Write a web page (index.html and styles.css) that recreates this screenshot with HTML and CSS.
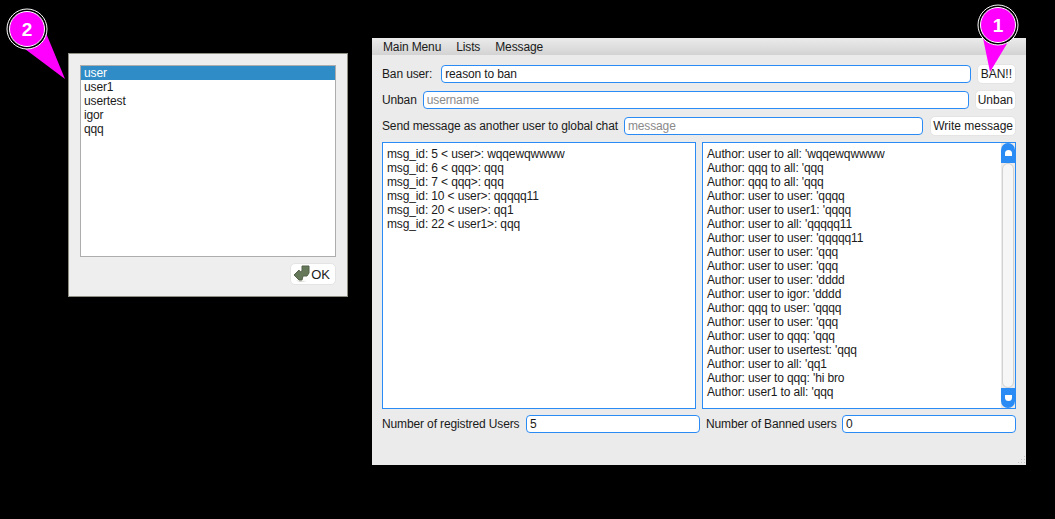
FILE: index.html
```html
<!DOCTYPE html>
<html lang="en">
<head>
  <meta charset="UTF-8">
  <title>Admin panel</title>
  <link rel="stylesheet" href="styles.css">
</head>
<body>
  <div class="dialog">
    <ul class="user-list">
      <li class="selected">user</li>
      <li>user1</li>
      <li>usertest</li>
      <li>igor</li>
      <li>qqq</li>
    </ul>
    <div class="dialog-foot">
      <button class="btn ok-btn">
        <svg width="18" height="18" viewBox="0 0 18 18">
          <path d="M3 15.500 7 17l7-1z" fill="#d0d0ca"/>
          <path d="M9 1h7v7l-2 3h-4l-1 4H6L1 10l5-5 1 2 2-1z" fill="#66785a" stroke="#55634a" stroke-width="1"/>
        </svg>OK
      </button>
    </div>
  </div>

  <div class="window">
    <div class="menubar">
      <span>Main Menu</span>
      <span>Lists</span>
      <span>Message</span>
    </div>
    <div class="content">
      <div class="row">
        <label class="lbl-ban">Ban user:</label>
        <input class="field" value="reason to ban">
        <button class="btn btn-ban">BAN!!</button>
      </div>
      <div class="row">
        <label>Unban</label>
        <input class="field" placeholder="username">
        <button class="btn">Unban</button>
      </div>
      <div class="row row-send">
        <label>Send message as another user to global chat</label>
        <input class="field" placeholder="message">
        <button class="btn">Write message</button>
      </div>
      <div class="panels">
        <div class="panel">
          <div class="lines">
            <div>msg_id: 5 &lt; user&gt;: wqqewqwwww</div>
            <div>msg_id: 6 &lt; qqq&gt;: qqq</div>
            <div>msg_id: 7 &lt; qqq&gt;: qqq</div>
            <div>msg_id: 10 &lt; user&gt;: qqqqq11</div>
            <div>msg_id: 20 &lt; user&gt;: qq1</div>
            <div>msg_id: 22 &lt; user1&gt;: qqq</div>
          </div>
        </div>
        <div class="panel">
          <div class="lines">
            <div>Author: user to all: 'wqqewqwwww</div>
            <div>Author: qqq to all: 'qqq</div>
            <div>Author: qqq to all: 'qqq</div>
            <div>Author: user to user: 'qqqq</div>
            <div>Author: user to user1: 'qqqq</div>
            <div>Author: user to all: 'qqqqq11</div>
            <div>Author: user to user: 'qqqqq11</div>
            <div>Author: user to user: 'qqq</div>
            <div>Author: user to user: 'qqq</div>
            <div>Author: user to user: 'dddd</div>
            <div>Author: user to igor: 'dddd</div>
            <div>Author: qqq to user: 'qqqq</div>
            <div>Author: user to user: 'qqq</div>
            <div>Author: user to qqq: 'qqq</div>
            <div>Author: user to usertest: 'qqq</div>
            <div>Author: user to all: 'qq1</div>
            <div>Author: user to qqq: 'hi bro</div>
            <div>Author: user1 to all: 'qqq</div>
          </div>
          <div class="scrollbar">
            <div class="scroll-btn scroll-up"><span class="arrow"></span></div>
            <div class="scroll-handle"></div>
            <div class="scroll-btn scroll-down"><span class="arrow"></span></div>
          </div>
        </div>
      </div>
      <div class="stats">
        <div class="stat stat-users">
          <label>Number of registred Users</label>
          <input class="field" value="5">
        </div>
        <div class="stat">
          <label>Number of Banned users</label>
          <input class="field" value="0">
        </div>
      </div>
    </div>
    <svg class="grip" width="10" height="10" viewBox="0 0 10 10">
      <path d="M8 1h1v1H8zM5 4h1v1H5zM8 4h1v1H8zM2 7h1v1H2zM5 7h1v1H5zM8 7h1v1H8z" fill="#c4c4c4"/>
    </svg>
  </div>

  <svg class="callouts" width="1055" height="519" viewBox="0 0 1055 519">
    <g>
      <path d="M46 33 65 79 25 49z" fill="#ff00ff"/>
      <circle cx="27" cy="29" r="20" fill="#000" stroke="#fff" stroke-width="1"/>
      <circle cx="27" cy="29" r="17.500" fill="#ff00ff" stroke="#fff" stroke-width="1"/>
      <text x="27" y="36" class="callout-num">2</text>
    </g>
    <g>
      <path d="M983 38 990 72 1008 42z" fill="#ff00ff"/>
      <circle cx="998" cy="25" r="20" fill="#000" stroke="#fff" stroke-width="1"/>
      <circle cx="998" cy="25" r="17.500" fill="#ff00ff" stroke="#fff" stroke-width="1"/>
      <text x="998" y="32" class="callout-num">1</text>
    </g>
  </svg>
</body>
</html>
```

FILE: styles.css
```css
body {
  margin: 0;
  width: 1055px;
  height: 519px;
  background: #000;
  overflow: hidden;
  position: relative;
  font-family: "Liberation Sans", Arial, sans-serif;
  font-size: 12px;
  letter-spacing: -0.13px;
  color: #1a1a1a;
}

.callouts {
  position: absolute;
  top: 0;
  left: 0;
}
.callout-num {
  fill: #fff;
  font-family: "Liberation Sans", Arial, sans-serif;
  font-size: 19px;
  font-weight: bold;
  text-anchor: middle;
}

/* shared widgets */
.btn {
  height: 20px;
  padding: 0 2px;
  background: #fff;
  border: 1px solid #e4e4e4;
  border-radius: 5px;
  font: inherit;
  letter-spacing: normal;
  color: inherit;
  white-space: nowrap;
}
.btn-ban {
  padding: 0 3px;
}
.field {
  flex: 1;
  min-width: 0;
  height: 18px;
  box-sizing: border-box;
  padding: 0 3px;
  background: #fff;
  border: 1px solid #2a8bf5;
  border-radius: 4px;
  font: inherit;
  letter-spacing: inherit;
  color: inherit;
  outline: none;
}
.field::placeholder {
  color: #8a8a8a;
  opacity: 1;
}

/* list dialog */
.dialog {
  position: absolute;
  left: 68px;
  top: 53px;
  width: 280px;
  height: 244px;
  box-sizing: border-box;
  padding: 11px 11px 0;
  background: #eeeeee;
  border: 1px solid #8f8f83;
  display: flex;
  flex-direction: column;
}
.user-list {
  margin: 0;
  padding: 0;
  list-style: none;
  height: 192px;
  box-sizing: border-box;
  background: #fff;
  border: 1px solid #adadad;
  line-height: 14px;
}
.user-list li {
  padding-left: 3px;
}
.user-list .selected {
  background: #308cc6;
  color: #fff;
}
.dialog-foot {
  display: flex;
  justify-content: flex-end;
  margin-top: 6px;
}
.ok-btn {
  height: 22px;
  display: flex;
  align-items: center;
  padding: 0 5px 0 2px;
  font-size: 13px;
}

/* main window */
.window {
  position: absolute;
  left: 372px;
  top: 38px;
  width: 654px;
  height: 427px;
  background: #ebebeb;
  display: flex;
  flex-direction: column;
}
.menubar {
  height: 17px;
  flex: none;
  display: flex;
  align-items: center;
  gap: 15px;
  padding-left: 11px;
  background: linear-gradient(#ebebeb, #d3d3d3);
}
.content {
  padding: 10px 10px 0;
  display: flex;
  flex-direction: column;
}
.row {
  height: 18px;
  display: flex;
  align-items: center;
  gap: 6px;
  margin-bottom: 8px;
}
.lbl-ban {
  margin-right: 3px;
}
.row-send .btn {
  margin-left: 1px;
}
.panels {
  display: flex;
  gap: 6px;
  height: 267px;
  margin-top: -1px;
}
.panel {
  flex: 1;
  display: flex;
  background: #fff;
  border: 1px solid #2a8bf5;
}
.lines {
  flex: 1;
  padding: 4px 4px 0;
  line-height: 14px;
}
.scrollbar {
  width: 14px;
  display: flex;
  flex-direction: column;
  background: #ebebeb;
}
.scroll-btn {
  height: 20px;
  flex: none;
  background: #2a8bf5;
  display: flex;
  align-items: center;
  justify-content: center;
}
.scroll-up {
  border-radius: 7px 7px 0 0;
}
.scroll-down {
  border-radius: 0 0 7px 7px;
}
.arrow {
  width: 7px;
  height: 6px;
  background: #fff;
}
.scroll-up .arrow {
  border-radius: 4px 4px 0 0;
}
.scroll-down .arrow {
  border-radius: 0 0 4px 4px;
}
.scroll-handle {
  flex: 1;
  margin: 0 1px;
  background: #f6f6f6;
  border: 1px solid #d2d2d2;
  border-radius: 6px;
}
.stats {
  display: flex;
  gap: 6px;
  margin-top: 6px;
}
.stat {
  flex: 1;
  display: flex;
  align-items: center;
  justify-content: space-between;
}
.stat-users {
  flex: 0 0 318px;
}
.stat .field {
  flex: none;
  width: 174px;
}
.grip {
  position: absolute;
  right: 0;
  bottom: 0;
}
```
